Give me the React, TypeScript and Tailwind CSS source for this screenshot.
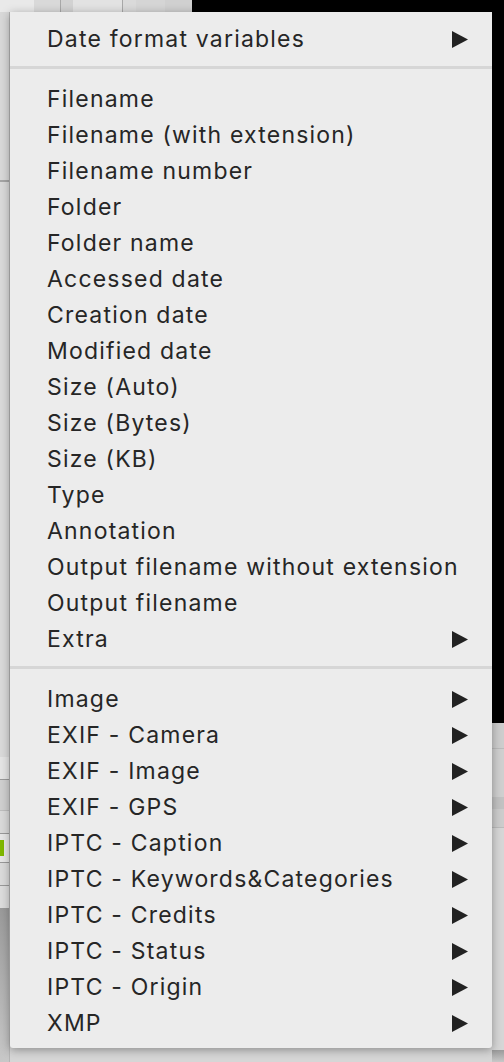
import { Fragment } from 'react';

type Entry = { label: string; submenu?: boolean } | 'sep';

const entries: Entry[] = [
  { label: 'Date format variables', submenu: true },
  'sep',
  { label: 'Filename' },
  { label: 'Filename (with extension)' },
  { label: 'Filename number' },
  { label: 'Folder' },
  { label: 'Folder name' },
  { label: 'Accessed date' },
  { label: 'Creation date' },
  { label: 'Modified date' },
  { label: 'Size (Auto)' },
  { label: 'Size (Bytes)' },
  { label: 'Size (KB)' },
  { label: 'Type' },
  { label: 'Annotation' },
  { label: 'Output filename without extension' },
  { label: 'Output filename' },
  { label: 'Extra', submenu: true },
  'sep',
  { label: 'Image', submenu: true },
  { label: 'EXIF - Camera', submenu: true },
  { label: 'EXIF - Image', submenu: true },
  { label: 'EXIF - GPS', submenu: true },
  { label: 'IPTC - Caption', submenu: true },
  { label: 'IPTC - Keywords&Categories', submenu: true },
  { label: 'IPTC - Credits', submenu: true },
  { label: 'IPTC - Status', submenu: true },
  { label: 'IPTC - Origin', submenu: true },
  { label: 'XMP', submenu: true },
];

const Arrow = () => (
  <svg width="16" height="17" viewBox="0 0 16 17" className="shrink-0">
    <path d="M0 0 L16 8.5 L0 17 Z" fill="#222222" />
  </svg>
);

const Background = () => (
  <div className="flex h-[1062px] w-[504px] flex-col bg-[#d6d6d6]">
    <div className="flex h-[12px] shrink-0">
      <div className="w-[34px] bg-[#e9e9e9]" />
      <div className="w-[26px] bg-[#d9d9d9]" />
      <div className="w-[1px] bg-[#a8a8a8]" />
      <div className="w-[12px] bg-[#d2d2d2]" />
      <div className="w-[49px] bg-[#e2e2e2]" />
      <div className="w-[1px] bg-[#a8a8a8]" />
      <div className="w-[13px] bg-[#dadada]" />
      <div className="w-[29px] bg-[#d5d5d5]" />
      <div className="w-[27px] bg-[#d0d0d0]" />
      <div className="flex-1 bg-black" />
    </div>
    <div className="flex flex-1">
      <div className="flex w-[10px] flex-col border-r border-[#b5b5b5]">
        <div className="h-[168px] bg-[#d8d8d8]" />
        <div className="h-[2px] bg-[#a5a5a5]" />
        <div className="h-[575px] bg-[#d9d9d9]" />
        <div className="h-[22px] bg-[#e4e4e4]" />
        <div className="h-[1px] bg-[#999999]" />
        <div className="h-[30px] bg-[#cfcfcf]" />
        <div className="h-[1px] bg-[#bdbdbd]" />
        <div className="h-[22px] bg-[#d9d9d9]" />
        <div className="h-[1px] bg-[#999999]" />
        <div className="flex h-[28px] items-center bg-[#e6e6e6]">
          <div className="h-[16px] w-[4px] bg-[#7fb800]" />
        </div>
        <div className="h-[1px] bg-[#999999]" />
        <div className="h-[22px] bg-[#dadada]" />
        <div className="h-[1px] bg-[#999999]" />
        <div className="h-[22px] bg-[#dcdcdc]" />
        <div className="flex-1 bg-gradient-to-b from-[#9a9a9a] to-[#c8c8c8]" />
      </div>
      <div className="flex-1" />
      <div className="flex w-[12px] flex-col">
        <div className="h-[711px] bg-black" />
        <div className="h-[25px] bg-[#cdcdcd]" />
        <div className="h-[1px] bg-[#bbbbbb]" />
        <div className="h-[48px] bg-[#cfcfcf]" />
        <div className="h-[12px] bg-[#c2c2c2]" />
        <div className="h-[18px] bg-[#cccccc]" />
        <div className="h-[1px] bg-[#bbbbbb]" />
        <div className="h-[222px] bg-[#d6d6d6]" />
        <div className="flex-1 bg-gradient-to-b from-[#9a9a9a] to-[#c8c8c8]" />
      </div>
    </div>
  </div>
);

export default function App() {
  return (
    <div className="relative h-[1062px] w-[504px] overflow-hidden">
      <Background />
      <div
        className="absolute left-[10px] top-[12px] w-[482px] rounded-b-[3px] bg-[#ececec] pb-[7px] pt-[9px] text-[#262626] shadow-[0_2px_10px_rgba(0,0,0,0.35)]"
        style={{ fontFamily: 'Inter, "Noto Sans", sans-serif' }}
      >
        {entries.map((e, i) =>
          e === 'sep' ? (
            <div key={i} className="h-[24px] pt-[9px]">
              <div className="h-[3px] bg-[#d6d6d6]" />
            </div>
          ) : (
            <Fragment key={i}>
              <div className="flex h-[36px] items-center pl-[37px] pr-[24px] text-[23px] leading-none tracking-[1.2px]">
                <span className="flex-1 whitespace-nowrap">{e.label}</span>
                {e.submenu && <Arrow />}
              </div>
            </Fragment>
          ),
        )}
      </div>
    </div>
  );
}
